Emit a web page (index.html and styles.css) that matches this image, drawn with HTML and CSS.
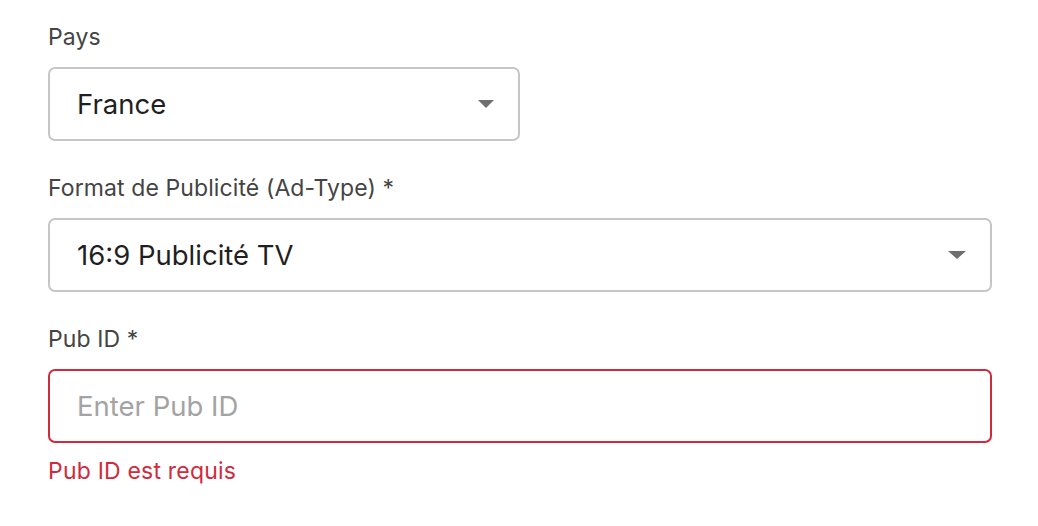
FILE: index.html
```html
<!DOCTYPE html>
<html lang="fr">
<head>
<meta charset="utf-8">
<link rel="stylesheet" href="styles.css">
</head>
<body>
<form class="form">
  <div class="field half">
    <label class="label">Pays</label>
    <div class="control">
      <span class="value">France</span>
      <svg class="caret" width="16" height="8" viewBox="0 0 16 8"><path d="M0 0H16L8 8Z" fill="#6f6f6f"/></svg>
    </div>
  </div>
  <div class="field">
    <label class="label">Format de Publicité (Ad-Type) *</label>
    <div class="control">
      <span class="value">16:9 Publicité TV</span>
      <svg class="caret" width="18" height="8" viewBox="0 0 18 8"><path d="M0 0H18L9 8Z" fill="#6f6f6f"/></svg>
    </div>
  </div>
  <div class="field">
    <label class="label">Pub ID *</label>
    <input class="control input error" type="text" placeholder="Enter Pub ID">
    <div class="error-text">Pub ID est requis</div>
  </div>
</form>
</body>
</html>
```

FILE: styles.css
```css
* { box-sizing: border-box; }
html, body { margin: 0; background: #ffffff; }
body {
  font-family: "Inter", "Roboto", "Liberation Sans", sans-serif;
}
.form {
  width: 944px;
  margin-left: 48px;
  padding-top: 23px;
  display: flex;
  flex-direction: column;
  gap: 33px;
}
.field {
  display: flex;
  flex-direction: column;
}
.field.half { width: 472px; }
.label {
  font-size: 23px;
  line-height: 28px;
  letter-spacing: 0.1px;
  color: #444444;
  margin-bottom: 16px;
}
.control {
  height: 74px;
  width: 100%;
  border: 2px solid #c6c6c6;
  border-radius: 7px;
  padding: 0 24px 0 27px;
  display: flex;
  align-items: center;
  justify-content: space-between;
  font-family: inherit;
  font-size: 27.5px;
  color: #1f1f1f;
  background: #ffffff;
  outline: none;
}
.input::placeholder { color: #a3a3a3; }
.control.error { border-color: #cf2b3d; }
.error-text {
  margin-top: 14px;
  font-size: 23px;
  line-height: 28px;
  letter-spacing: 0.2px;
  color: #cf2b3d;
}
```
